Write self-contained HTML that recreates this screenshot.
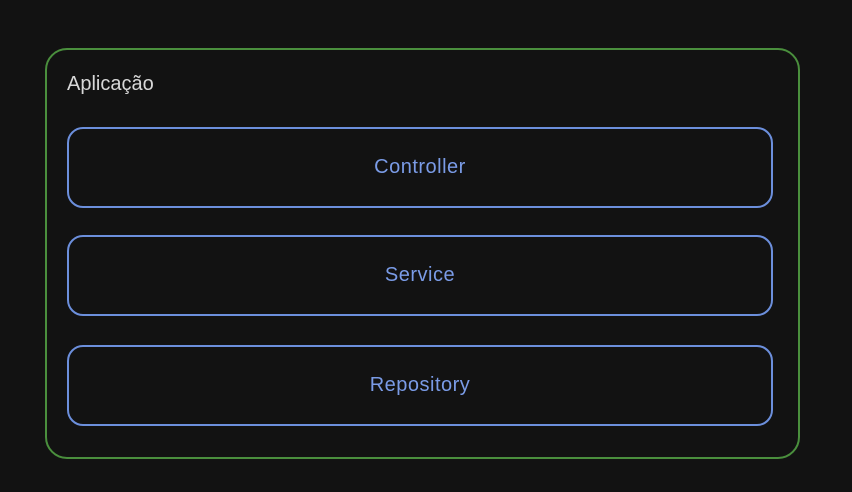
<!DOCTYPE html>
<html><head><style>
html,body{margin:0;padding:0;background:#121212;width:852px;height:492px;overflow:hidden}
.b{position:absolute;box-sizing:border-box;border-radius:16px}
.g{left:45px;top:48px;width:755px;height:411px;border:2px solid #4a8f3d;border-radius:22px}
.bl{border:2px solid #6c8fdc;left:67px;width:706px;height:81px;display:flex;align-items:center;justify-content:center;color:#7a9be6;font:20px "Liberation Sans",sans-serif;letter-spacing:0.5px}
.t{position:absolute;left:67px;top:73px;color:#d8d8d8;font:20px "Liberation Sans",sans-serif}
</style></head><body>
<div class="b g"></div>
<div class="t">Aplicação</div>
<div class="b bl" style="top:127px">Controller</div>
<div class="b bl" style="top:235px">Service</div>
<div class="b bl" style="top:345px">Repository</div>
</body></html>
